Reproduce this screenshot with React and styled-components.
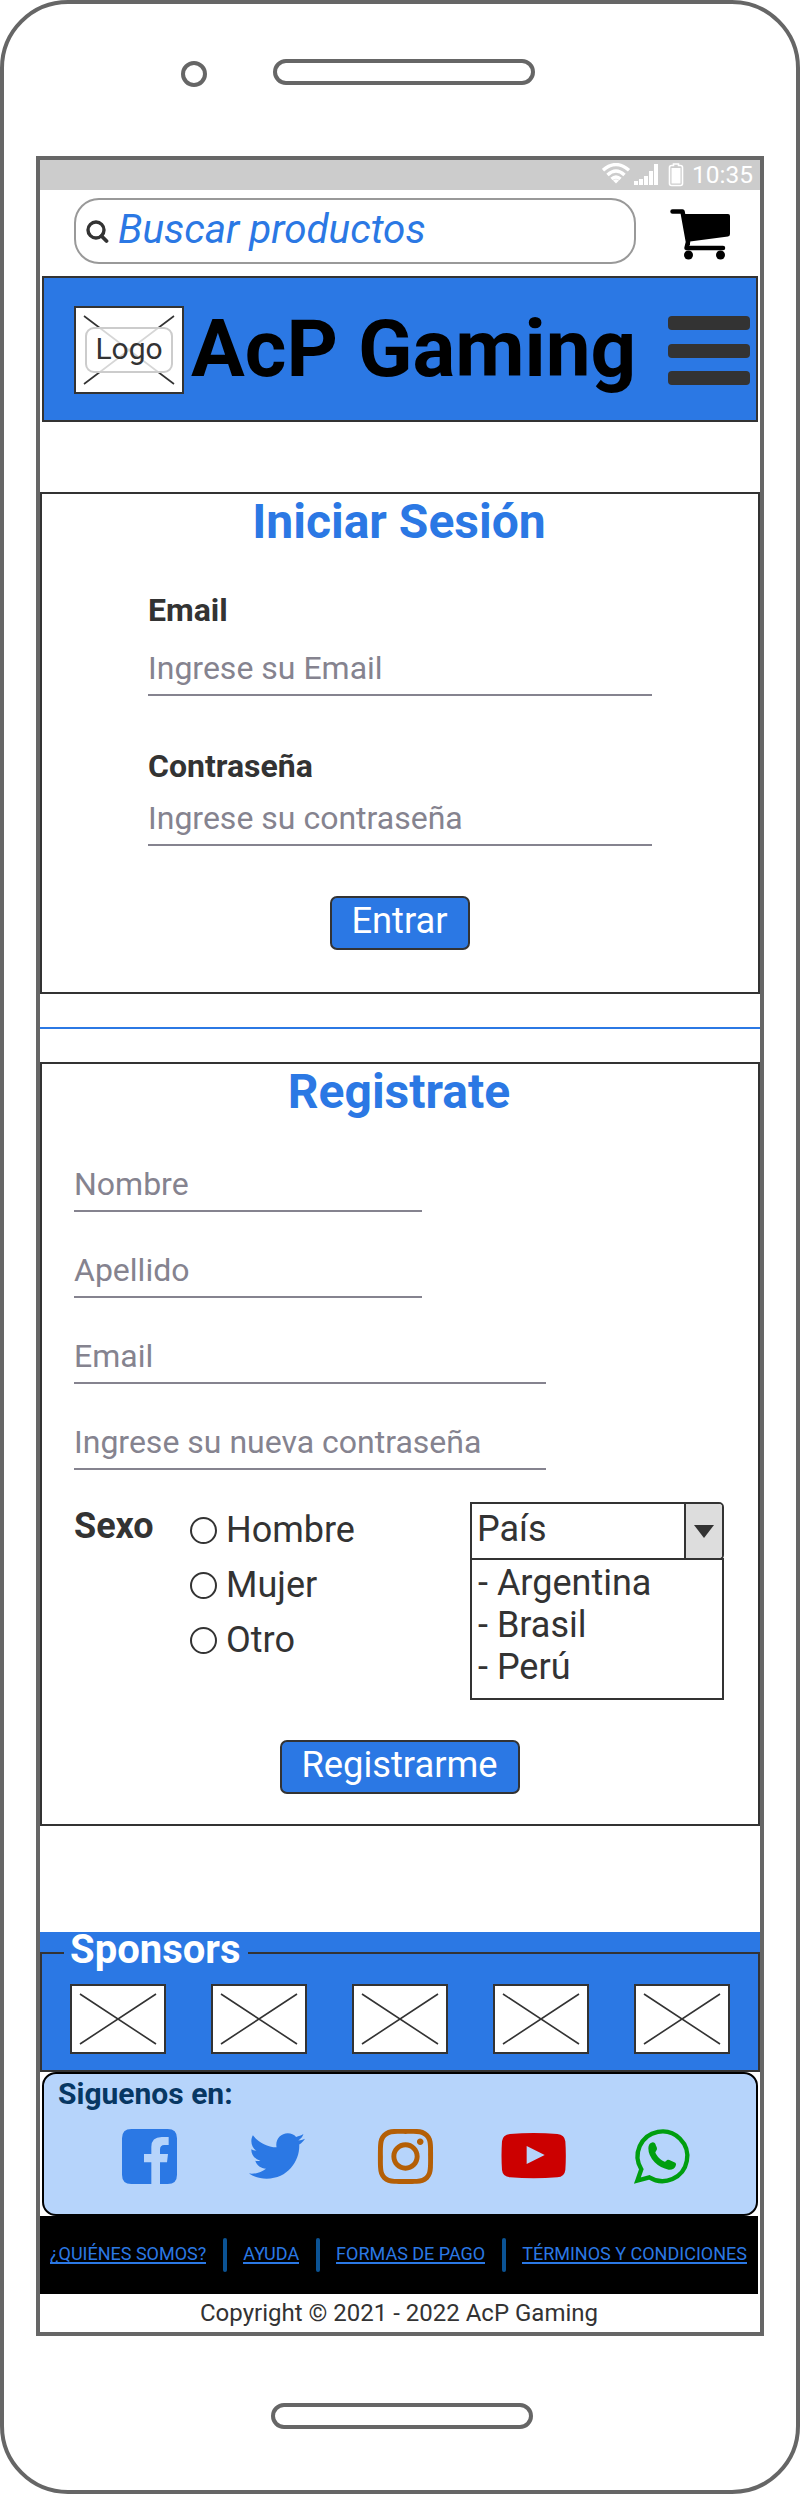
import React from "react";
import styled, { createGlobalStyle } from "styled-components";
import { FaTwitter, FaInstagram } from "react-icons/fa";

const blue = "#2b78e4";
const ink = "#333333";

const Global = createGlobalStyle`
  *{box-sizing:border-box}
  body{margin:0;background:#fff;font-family:Roboto,"Liberation Sans",sans-serif;color:${ink}}
`;

const Phone = styled.div`
  width:800px;height:2494px;border:4px solid #666;border-radius:68px;background:#fff;
  display:flex;flex-direction:column;align-items:center;
`;
const PhoneTop = styled.div`
  width:100%;height:152px;display:flex;align-items:flex-start;padding:55px 0 0 177px;
`;
const Camera = styled.div`
  width:26px;height:26px;margin-top:2px;border:4px solid #666;border-radius:50%;
`;
const Slot = styled.div`
  width:262px;height:26px;border:4px solid #666;border-radius:13px;margin:${(p) => p.$margin};
`;
const Screen = styled.main`
  width:728px;height:2180px;border:4px solid #666;display:flex;flex-direction:column;
`;
const StatusBar = styled.div`
  height:30px;background:#ccc;color:#fff;display:flex;justify-content:flex-end;align-items:flex-start;
  padding:3px 7px 0 0;font-size:24.5px;line-height:24px;
  svg{margin-right:8px}
`;
const SearchRow = styled.div`
  height:86px;padding:8px 28px 0 34px;display:flex;justify-content:space-between;align-items:flex-start;
  > svg{margin-top:11px}
`;
const SearchBox = styled.div`
  width:562px;height:66px;border:2px solid #999;border-radius:25px;display:flex;align-items:center;
  padding-left:10px;font-size:40.4px;line-height:58px;font-style:italic;color:${blue};
  span{margin:-2px 0 0 9px}
  svg{margin-top:2px}
`;
const Header = styled.header`
  height:146px;margin:0 2px;border:2px solid ${ink};background:${blue};display:flex;align-items:flex-start;
  padding:28px 6px 0 30px;
`;
const Logo = styled.div`
  width:110px;height:88px;display:grid;
  > *{grid-area:1/1}
`;
const LogoLabel = styled.span`
  place-self:center;width:88px;height:46px;border:2px solid #ccc;border-radius:9px;background:rgba(255,255,255,.8);
  text-align:center;font-size:30px;line-height:39px;
`;
const Brand = styled.h1`
  margin:-4px 0 0 7px;font-size:80px;line-height:94px;font-weight:700;color:#000;white-space:nowrap;
`;
const Burger = styled.div`
  width:82px;margin:10px 0 0 auto;display:flex;flex-direction:column;gap:13.5px;
  i{height:14px;border-radius:4px;background:${ink}}
`;
const Panel = styled.section`
  height:${(p) => p.$h}px;margin-top:${(p) => p.$mt}px;border:2px solid ${ink};
  padding:0 ${(p) => p.$pad}px;display:flex;flex-direction:column;align-items:flex-start;
`;
const Title = styled.h2`
  align-self:center;margin:0;padding-right:2px;font-size:48px;line-height:56px;font-weight:700;color:${blue};
`;
const Label = styled.label`
  font-size:32px;line-height:38px;font-weight:700;margin-top:${(p) => p.$mt}px;
`;
const Field = styled.div`
  width:${(p) => p.$w}px;height:48px;margin-top:${(p) => p.$mt}px;border-bottom:2px solid #85838f;
  color:#85838f;font-size:32px;line-height:40px;
`;
const Button = styled.button`
  align-self:center;width:${(p) => p.$w}px;height:54px;margin-top:${(p) => p.$mt}px;padding:0 1px 4px 0;
  border:2px solid ${ink};border-radius:7px;background:${blue};color:#fff;font:400 36.3px/42px Roboto,sans-serif;
`;
const Divider = styled.div`
  height:2px;flex-shrink:0;background:${blue};margin-top:33px;
`;
const Options = styled.div`
  width:650px;height:198px;margin-top:32px;display:flex;align-items:flex-start;
`;
const GroupName = styled.strong`
  width:116px;font-size:36px;line-height:40px;margin-top:4px;
`;
const Radios = styled.div`
  display:flex;flex-direction:column;gap:13px;margin-top:7px;
`;
const Radio = styled.div`
  display:flex;align-items:center;gap:9px;font-size:36px;line-height:42px;
  &::before{content:"";width:23px;height:23px;border:2px solid ${ink};border-radius:50%}
`;
const Country = styled.div`
  width:254px;margin-left:auto;font-size:36px;line-height:42px;
`;
const Select = styled.div`
  height:58px;border:2px solid ${ink};border-radius:0 5px 5px 0;display:flex;overflow:hidden;
  span{flex:1;padding:4px 0 0 5px}
`;
const Arrow = styled.div`
  width:38px;border-left:2px solid ${ink};background:#ddd;display:grid;place-items:center;
`;
const List = styled.ul`
  height:142px;margin:-2px 0 0;padding:2px 0 0 6px;border:2px solid ${ink};list-style:none;
`;
const Sponsors = styled.section`
  height:140px;margin-top:106px;padding-top:20px;background:${blue};
`;
const SponsorFrame = styled.div`
  height:120px;border:2px solid ${ink};padding:0 28px;display:flex;flex-direction:column;
`;
const SponsorTitle = styled.h3`
  width:184px;height:44px;margin:-22px 0 0 -6px;padding-left:6px;background:${blue};
  color:#fff;font-size:40px;line-height:36px;font-weight:700;
`;
const SponsorRow = styled.div`
  display:flex;justify-content:space-between;margin-top:8px;
`;
const Social = styled.section`
  height:144px;margin:0 2px;border:2px solid #000;border-radius:14px;background:#b6d4fb;padding:3px 0 0 14px;
  display:flex;flex-direction:column;
`;
const SocialTitle = styled.h3`
  margin:0;font-size:30px;line-height:34px;font-weight:700;color:#073763;
`;
const SocialRow = styled.div`
  height:64px;margin:13px 0 0 27px;display:grid;grid-template-columns:repeat(5,128px);place-items:center;
  svg{display:block;overflow:visible}
`;
const Footer = styled.footer`
  width:718px;height:78px;background:#000;display:flex;justify-content:space-between;padding:22px 11px 0 10px;
`;
const Link = styled.a`
  height:26px;color:${blue};font-size:18px;line-height:31px;white-space:nowrap;border-bottom:2px solid ${blue};
`;
const Bar = styled.i`
  width:4px;height:34px;border-radius:2px;background:#0b5394;
`;
const Copyright = styled.p`
  margin:0;padding-right:2px;text-align:center;font-size:24px;line-height:38px;
`;

const Crossed = ({ w, h }) => (
  <svg width={w} height={h} viewBox={`0 0 ${w} ${h}`}>
    <rect x="1" y="1" width={w - 2} height={h - 2} fill="#fff" stroke={ink} strokeWidth="2" />
    <path d={`M10 10L${w - 10} ${h - 10}M${w - 10} 10L10 ${h - 10}`} stroke={ink} strokeWidth="1.6" />
  </svg>
);

const SignalIcons = () => (
  <svg width="82" height="24" viewBox="0 0 82 24">
    <g fill="none" stroke="#fff" strokeWidth="3.4">
      <path d="M1 7.2Q14 -4 27 7.2" />
      <path d="M5.5 12Q14 4 22.5 12" />
      <path d="M9.5 16Q14 12 18.5 16" />
    </g>
    <path d="M11 17.5Q14 15 17 17.5L14 20.5Z" fill="#fff" />
    <path d="M32 18h4v4h-4zM37 16h4v6h-4zM42 13h4v9h-4zM47 8h4v14h-4zM52 1h4v21h-4z" fill="#fff" />
    <path d="M69.5 2.5h2v-1.5h5v1.5h2q2 0 2 2v16q0 2-2 2h-9q-2 0-2-2v-16q0-2 2-2z" fill="none" stroke="#fff" strokeWidth="1.6" />
    <rect x="69.5" y="5" width="9" height="15.5" fill="#fff" />
  </svg>
);

const SearchIcon = () => (
  <svg width="23" height="24" viewBox="0 0 23 24" fill="none" stroke={ink}>
    <circle cx="10" cy="10" r="8" strokeWidth="3.4" />
    <path d="M15.5 16L20.5 21" strokeWidth="3.8" strokeLinecap="round" />
  </svg>
);

const Cart = () => (
  <svg width="62" height="54" viewBox="0 0 62 54">
    <path d="M12 5H58Q60 5 60 7V25Q60 27 58 27.5L20 32.5V36H17Z" />
    <path d="M2.5 2.5H12.5L18 33L16.5 39H53" fill="none" stroke="#000" strokeWidth="4.5" strokeLinecap="round" strokeLinejoin="round" />
    <circle cx="18.5" cy="46" r="4.5" />
    <circle cx="50.5" cy="46" r="4.5" />
  </svg>
);

const Facebook = () => (
  <svg width="55" height="55" viewBox="0 0 165 165" fill={blue}>
    <path d="M28 0H137Q165 0 165 28V137Q165 165 137 165H114V100H135L138 75H114V62Q114 48 127 48H140V24H119Q88 24 88 54V75H66V100H88V165H28Q0 165 0 137V28Q0 0 28 0Z" />
  </svg>
);

const Youtube = () => (
  <svg width="64" height="45.33" viewBox="-2 0 192 136" fill="#cc0000">
    <path fillRule="evenodd" d="M25 3Q96 -3 167 3Q189 5 191 25Q194 68 191 111Q189 131 167 133Q96 139 25 133Q3 131 1 111Q-2 68 1 25Q3 5 25 3ZM75 39V93L129 66Z" />
  </svg>
);

const Whatsapp = () => (
  <svg width="55" height="55" viewBox="0 0 165 165">
    <path d="M10 155L22 121A74.5 74.5 0 1 1 46 145Z" fill="none" stroke="#009e0f" strokeWidth="13" strokeMiterlimit="8" />
    <path d="M52 41Q62 37 66 50Q72 60 66 66Q62 70 66 75Q76 92 92 98Q96 98 99 93Q102 91 106 93L124 101Q128 104 125 111Q121 123 104 122Q80 118 62 100Q43 80 43 58Q43 45 52 41Z" fill="#009e0f" />
  </svg>
);

export default function App() {
  return (
    <>
      <Global />
      <Phone>
        <PhoneTop>
          <Camera />
          <Slot $margin="0 0 0 66px" />
        </PhoneTop>
        <Screen>
          <StatusBar><SignalIcons />10:35</StatusBar>
          <SearchRow>
            <SearchBox><SearchIcon /><span>Buscar productos</span></SearchBox>
            <Cart />
          </SearchRow>
          <Header>
            <Logo><Crossed w={110} h={88} /><LogoLabel>Logo</LogoLabel></Logo>
            <Brand>AcP Gaming</Brand>
            <Burger><i /><i /><i /></Burger>
          </Header>
          <Panel $h={502} $mt={70} $pad={106}>
            <Title>Iniciar Sesión</Title>
            <Label $mt={41}>Email</Label>
            <Field $w={504} $mt={19}>Ingrese su Email</Field>
            <Label $mt={51}>Contraseña</Label>
            <Field $w={504} $mt={13}>Ingrese su contraseña</Field>
            <Button $w={140} $mt={50}>Entrar</Button>
          </Panel>
          <Divider />
          <Panel $h={764} $mt={33} $pad={32}>
            <Title>Registrate</Title>
            <Field $w={348} $mt={44}>Nombre</Field>
            <Field $w={348} $mt={38}>Apellido</Field>
            <Field $w={472} $mt={38}>Email</Field>
            <Field $w={472} $mt={38}>Ingrese su nueva contraseña</Field>
            <Options>
              <GroupName>Sexo</GroupName>
              <Radios><Radio>Hombre</Radio><Radio>Mujer</Radio><Radio>Otro</Radio></Radios>
              <Country>
                <Select>
                  <span>País</span>
                  <Arrow><svg width="20" height="13"><path d="M0 0H20L10 13Z" fill={ink} /></svg></Arrow>
                </Select>
                <List><li>- Argentina</li><li>- Brasil</li><li>- Perú</li></List>
              </Country>
            </Options>
            <Button $w={240} $mt={40}>Registrarme</Button>
          </Panel>
          <Sponsors>
            <SponsorFrame>
              <SponsorTitle>Sponsors</SponsorTitle>
              <SponsorRow>{[1, 2, 3, 4, 5].map((n) => <Crossed key={n} w={96} h={70} />)}</SponsorRow>
            </SponsorFrame>
          </Sponsors>
          <Social>
            <SocialTitle>Siguenos en:</SocialTitle>
            <SocialRow>
              <Facebook />
              <FaTwitter size={56} color={blue} />
              <FaInstagram size={63} color="#b45f06" />
              <Youtube />
              <Whatsapp />
            </SocialRow>
          </Social>
          <Footer>
            <Link>¿QUIÉNES SOMOS?</Link><Bar />
            <Link>AYUDA</Link><Bar />
            <Link>FORMAS DE PAGO</Link><Bar />
            <Link>TÉRMINOS Y CONDICIONES</Link>
          </Footer>
          <Copyright>Copyright © 2021 - 2022 AcP Gaming</Copyright>
        </Screen>
        <Slot $margin="67px 0 0 4px" />
      </Phone>
    </>
  );
}
